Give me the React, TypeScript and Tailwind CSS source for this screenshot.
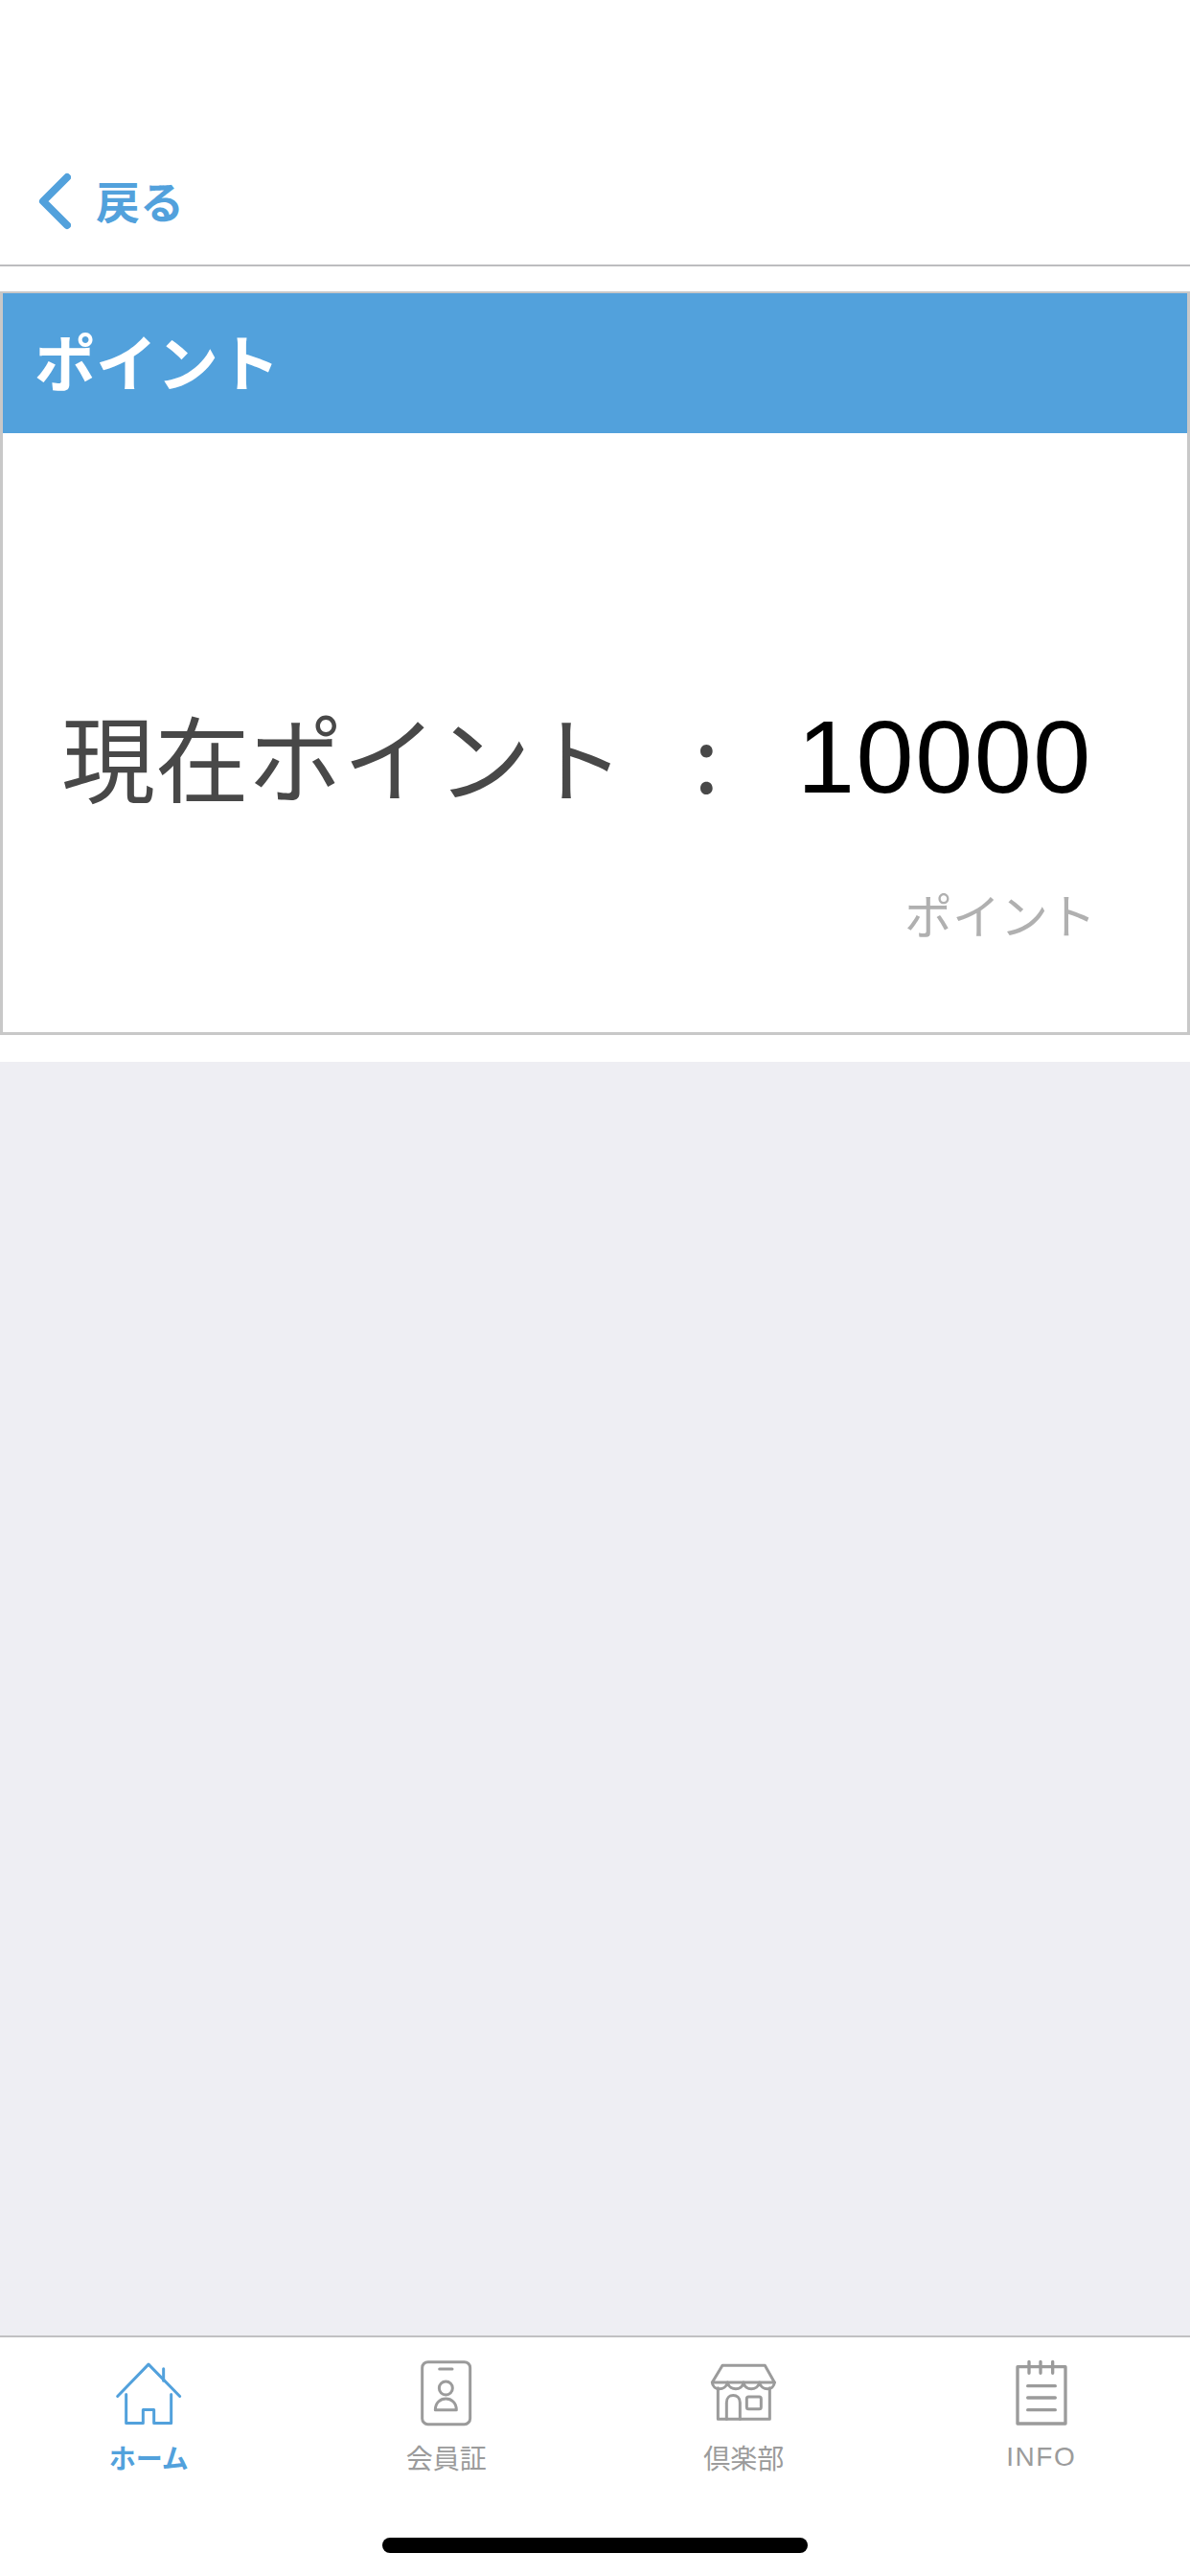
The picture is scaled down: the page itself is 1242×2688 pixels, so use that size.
import React from "react";

const jp = "font-['Noto_Sans_CJK_JP','Noto_Sans_CJK_SC',sans-serif]";

function HomeIcon() {
  return (
    <svg width="70" height="67" viewBox="180 125 210 200" fill="none" stroke="#52a1dc" strokeWidth="9" strokeLinecap="round" strokeLinejoin="round">
      <path d="M188 234 L285 134 L383 234" />
      <path d="M332 148 V185" />
      <path d="M215 228 V318 H268 V276 H302 V318 H356 V228" />
    </svg>
  );
}

function CardIcon() {
  return (
    <svg width="55" height="70" viewBox="1135 120 165 210" fill="none" stroke="#9b9b9b" strokeWidth="9" strokeLinecap="round" strokeLinejoin="round">
      <rect x="1143" y="128" width="150" height="195" rx="18" />
      <path d="M1197 150 H1237" />
      <circle cx="1217" cy="210" r="21" />
      <path d="M1184 278 C1184 255 1200 243 1217 243 C1234 243 1250 255 1250 278 Z" />
    </svg>
  );
}

function ShopIcon() {
  return (
    <svg width="70" height="64" viewBox="183 132 210 192" fill="none" stroke="#9b9b9b" strokeWidth="9" strokeLinecap="round" strokeLinejoin="round">
      <path d="M222 142 H355 L385 195 H190 Z" />
      <path d="M190 195 C192 222 232 222 238 195 C244 222 284 222 288 195 C292 222 332 222 338 195 C344 222 383 222 385 195" />
      <path d="M208 212 V310 H370 V212" />
      <path d="M235 310 V258 C235 228 277 228 277 258 V310" />
      <rect x="298" y="240" width="45" height="38" rx="6" />
    </svg>
  );
}

function NoteIcon() {
  return (
    <svg width="55" height="70" viewBox="1137 122 165 210" fill="none" stroke="#9b9b9b" strokeWidth="10" strokeLinecap="round" strokeLinejoin="round">
      <rect x="1146" y="145" width="150" height="178" />
      <path d="M1182 129 V165 M1218 129 V165 M1256 129 V165" />
      <path d="M1178 205 H1264 M1178 242 H1264 M1178 280 H1264" />
    </svg>
  );
}

const tabs = [
  { label: "ホーム", icon: <HomeIcon />, active: true },
  { label: "会員証", icon: <CardIcon /> },
  { label: "倶楽部", icon: <ShopIcon /> },
  { label: "INFO", icon: <NoteIcon /> },
];

export default function App() {
  return (
    <div className={`relative flex h-[2688px] w-[1242px] flex-col bg-white ${jp}`}>
      {/* header */}
      <div className="flex h-[278px] items-end border-b-[2px] border-[#bdbdbf] pb-[36px] pl-[40px]">
        <svg width="34" height="60" viewBox="0 0 34 60" fill="none" stroke="#52a1dc" strokeWidth="8" strokeLinecap="round" strokeLinejoin="round">
          <path d="M30 5 L5 30 L30 55" />
        </svg>
        <span className="mb-[2px] ml-[26px] text-[46px] leading-[60px] font-bold text-[#52a1dc]">戻る</span>
      </div>

      {/* point card */}
      <div className="mt-[26px] h-[776px] border-[3px] border-t-[2px] border-[#c8c8c8]">
        <div className="flex h-[146px] items-center bg-[#52a1dc] pb-[8px] pl-[33px] text-[64px] font-bold text-white">ポイント</div>
        <div className="flex flex-col pt-[277px] pr-[95px] pl-[61px]">
          <div className="flex items-center">
            <span className="w-[660px] text-[98px] leading-[110px] font-normal text-[#484848]">現在ポイント</span>
            <span className="w-[108px] text-[96px] leading-[110px] font-normal text-[#484848]">:</span>
            <span className="mt-[6px] font-['Liberation_Sans',sans-serif] text-[108px] leading-[110px] tracking-[1.5px] text-black">10000</span>
          </div>
          <div className="mt-[78px] text-right text-[50px] leading-[60px] font-normal text-[#b0b0b0]">ポイント</div>
        </div>
      </div>

      {/* empty area */}
      <div className="mt-[28px] flex-1 bg-[#eeeef3]" />

      {/* tab bar */}
      <div className="grid h-[251px] grid-cols-4 border-t-[2px] border-[#c0c0c2] bg-white pt-[23px]">
        {tabs.map((t) => (
          <div key={t.label} className="flex flex-col items-center">
            <div className="flex h-[70px] items-center justify-center">{t.icon}</div>
            <span
              className={`mt-[14px] text-[28px] leading-[36px] ${t.active ? "font-bold text-[#52a1dc]" : "text-[#9b9b9b]"} ${t.label === "INFO" ? "font-['Liberation_Sans',sans-serif] tracking-[1.5px]" : ""}`}
            >
              {t.label}
            </span>
          </div>
        ))}
      </div>

      {/* home indicator */}
      <div className="absolute top-[2648px] left-[399px] h-[16px] w-[444px] rounded-full bg-black" />
    </div>
  );
}
